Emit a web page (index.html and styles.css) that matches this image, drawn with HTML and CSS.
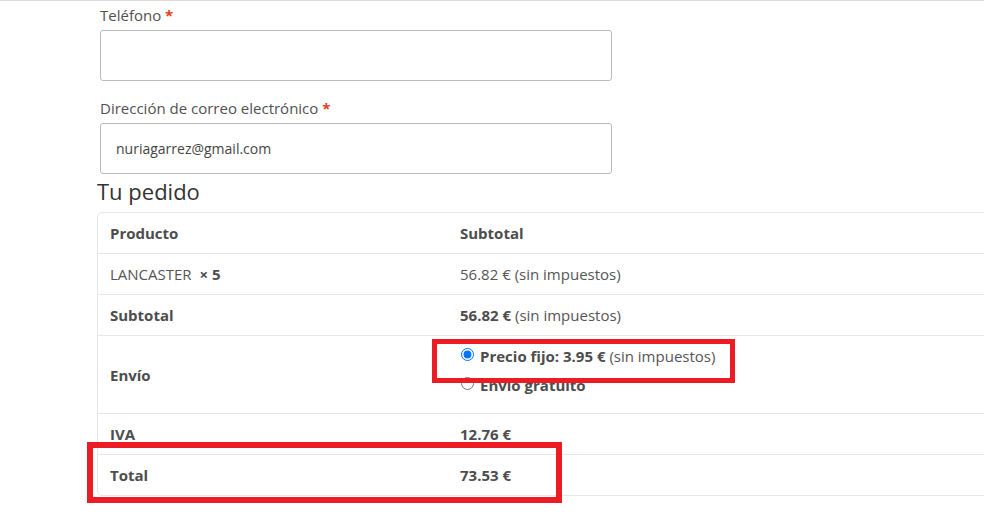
FILE: index.html
```html
<!DOCTYPE html>
<html lang="es">
<head>
    <meta charset="UTF-8">
    <meta name="viewport" content="width=device-width, initial-scale=1.0">
    <title>Finalizar compra</title>
    <link rel="stylesheet" href="styles.css">
</head>
<body>

<div class="checkout">
    <div class="field">
        <label for="phone">Teléfono <abbr class="required" title="obligatorio">*</abbr></label>
        <input type="tel" id="phone" name="phone">
    </div>

    <div class="field">
        <label for="email">Dirección de correo electrónico <abbr class="required" title="obligatorio">*</abbr></label>
        <input type="email" id="email" name="email" value="nuriagarrez@gmail.com">
    </div>

    <h3 class="order-title">Tu pedido</h3>

    <table class="order-table">
        <colgroup>
            <col class="col-name">
            <col>
        </colgroup>
        <thead>
            <tr>
                <th>Producto</th>
                <th>Subtotal</th>
            </tr>
        </thead>
        <tbody>
            <tr>
                <td>LANCASTER&nbsp; <strong class="qty">× 5</strong></td>
                <td>56.82 € <small>(sin impuestos)</small></td>
            </tr>
        </tbody>
        <tfoot>
            <tr>
                <th>Subtotal</th>
                <td><strong>56.82 €</strong> <small>(sin impuestos)</small></td>
            </tr>
            <tr class="shipping">
                <th>Envío</th>
                <td>
                    <ul class="shipping-methods">
                        <li>
                            <input type="radio" name="shipping" id="ship-flat" checked><label for="ship-flat">Precio fijo: <strong>3.95 €</strong> <small>(sin impuestos)</small></label>
                        </li>
                        <li>
                            <input type="radio" name="shipping" id="ship-free"><label for="ship-free">Envío gratuito</label>
                        </li>
                    </ul>
                </td>
            </tr>
            <tr>
                <th>IVA</th>
                <td><strong>12.76 €</strong></td>
            </tr>
            <tr>
                <th>Total</th>
                <td><strong>73.53 €</strong></td>
            </tr>
        </tfoot>
    </table>

    <!-- marcas rojas de la captura -->
    <div class="mark mark-shipping"></div>
    <div class="mark mark-total"></div>
</div>

</body>
</html>
```

FILE: styles.css
```css
/* Página de pago */
html, body {
    margin: 0;
    overflow: hidden;
}
body {
    font-family: "Open Sans", "Liberation Sans", sans-serif;
    color: #515151;
    background: #fff;
    border-top: 1px solid #dcdcdc;
}
.checkout {
    position: relative;
    padding: 3px 0 0 100px;
    height: 514px;
    box-sizing: border-box;
}

/* Campos */
.field {
    margin-bottom: 16px;
}
.field label {
    display: block;
    font-size: 15px;
    line-height: 22px;
    margin-bottom: 4px;
    color: #515151;
}
.required {
    color: #e2401c;
    font-weight: 700;
    text-decoration: none;
    border: none;
}
.field input {
    display: block;
    width: 512px;
    height: 51px;
    box-sizing: border-box;
    padding: 0 15px;
    border: 1px solid #bbb;
    border-radius: 3px;
    font-family: inherit;
    font-size: 14px;
    color: #444;
    background: #fff;
}

/* Pedido */
.order-title {
    margin: -14px 0 6px -3px;
    font-size: 22px;
    line-height: 30px;
    font-weight: 400;
    color: #333;
}
.order-table {
    margin-left: -3px;
    width: 920px;
    table-layout: fixed;
    border-collapse: separate;
    border-spacing: 0;
    border: 1px solid #e6e6e6;
    border-radius: 5px;
    font-size: 15px;
    line-height: 20px;
    color: #555;
}
.order-table .col-name {
    width: 349px;
}
.order-table th,
.order-table td {
    height: 40px;
    padding: 0 12px;
    text-align: left;
    vertical-align: middle;
    border-top: 1px solid #e6e6e6;
}
.order-table td:last-child,
.order-table th:last-child {
    padding-left: 13px;
}
.order-table thead th {
    border-top: none;
}
.order-table th,
.order-table strong {
    font-weight: 700;
    color: #4d4d4d;
}
.order-table small {
    font-size: 15px;
}

/* Envío */
.order-table .shipping th {
    height: 77px;
}
.order-table .shipping td {
    vertical-align: top;
    padding-top: 6px;
}
.shipping-methods {
    list-style: none;
    margin: 0;
    padding: 0;
}
.shipping-methods li {
    line-height: 29px;
}
.shipping-methods input {
    margin: 0 6px 0 1px;
    width: 13px;
    height: 13px;
    vertical-align: 1px;
}
.shipping-methods label {
    font-weight: 700;
    color: #4d4d4d;
}
.shipping-methods label small {
    font-weight: 400;
    color: #555;
}

/* Marcas rojas */
.mark {
    position: absolute;
    border: 5px solid #ed1c24;
    box-sizing: border-box;
}
.mark-shipping {
    left: 432px;
    top: 338px;
    width: 303px;
    height: 44px;
}
.mark-total {
    left: 87px;
    top: 441px;
    width: 475px;
    height: 61px;
    border-width: 6px;
}
```
